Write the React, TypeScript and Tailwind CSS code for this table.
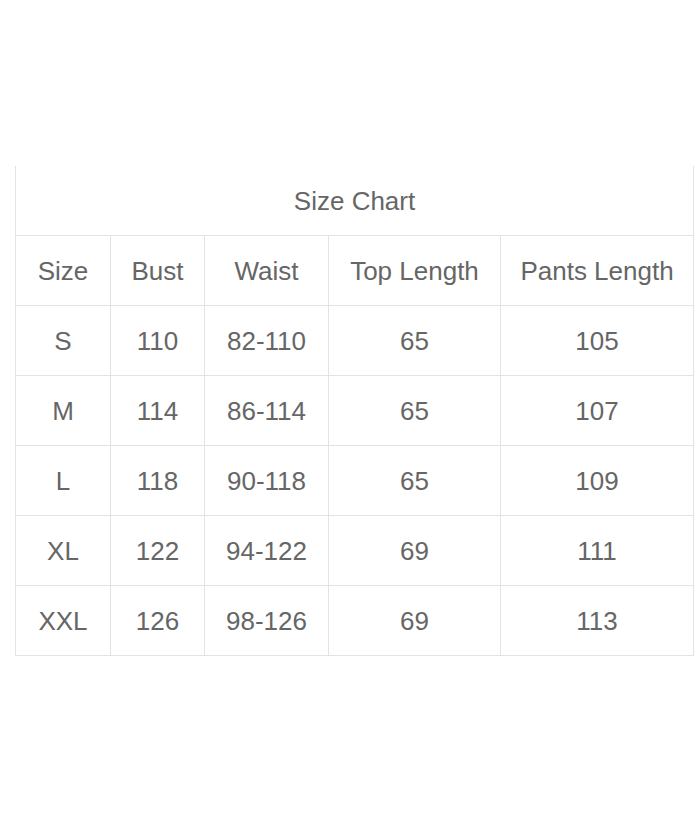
const rows = [
  ["S", "110", "82-110", "65", "105"],
  ["M", "114", "86-114", "65", "107"],
  ["L", "118", "90-118", "65", "109"],
  ["XL", "122", "94-122", "69", "111"],
  ["XXL", "126", "98-126", "69", "113"],
];

const head = ["Size", "Bust", "Waist", "Top Length", "Pants Length"];

export default function App() {
  return (
    <div className="w-[700px] h-[823px] bg-white pt-[166px] pl-[15px]" style={{ fontFamily: '"Liberation Sans", Arial, sans-serif' }}>
      <table className="border-collapse table-fixed w-[678px] text-[#666] text-[26px]">
        <colgroup>
          <col className="w-[95px]" />
          <col className="w-[94px]" />
          <col className="w-[124px]" />
          <col className="w-[172px]" />
          <col className="w-[193px]" />
        </colgroup>
        <tbody>
          <tr className="h-[69px]">
            <td colSpan={5} className="text-center pt-[2px] border-x border-b border-[#e3e3e3]">Size Chart</td>
          </tr>
          <tr className="h-[70px]">
            {head.map((h) => (
              <td key={h} className="text-center pt-[2px] border border-[#e3e3e3] whitespace-nowrap">{h}</td>
            ))}
          </tr>
          {rows.map((r) => (
            <tr key={r[0]} className="h-[70px]">
              {r.map((c, i) => (
                <td key={i} className="text-center pt-[2px] border border-[#e3e3e3]">{c}</td>
              ))}
            </tr>
          ))}
        </tbody>
      </table>
    </div>
  );
}
